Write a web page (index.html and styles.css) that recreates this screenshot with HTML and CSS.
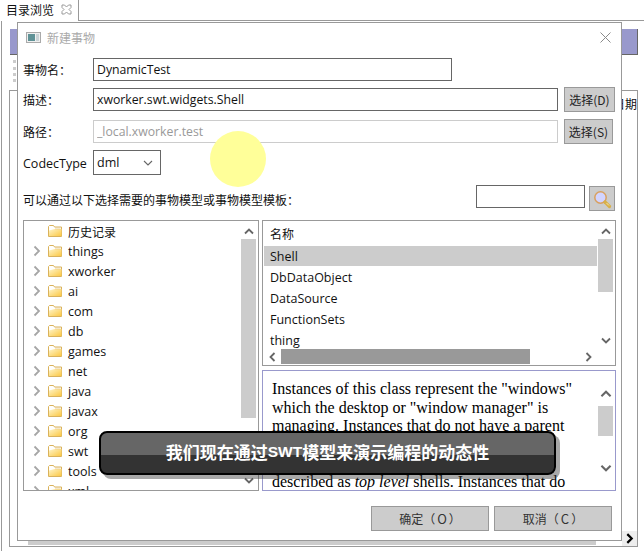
FILE: index.html
```html
<!DOCTYPE html>
<html lang="zh">
<head>
<meta charset="utf-8">
<title>目录浏览</title>
<link rel="stylesheet" href="styles.css">
</head>
<body>
<svg class="defs" width="0" height="0" aria-hidden="true">
  <defs>
    <linearGradient id="fold" x1="0" y1="0" x2="1" y2="1">
      <stop offset="0" stop-color="#fff4c8"/><stop offset="1" stop-color="#fbc845"/>
    </linearGradient>
    <symbol id="folder" viewBox="0 0 14 12">
      <path d="M.5 11.5V1.5L1.500.5h4l1 1.500h7v9.500z" fill="#fff" stroke="#d9b25c"/>
      <path d="M1 5.500 6.500 4h7v7H1z" fill="url(#fold)"/>
      <path d="M7 2.800h5.500M7 4h5.500" stroke="#e6c98a" stroke-width=".6"/>
    </symbol>
    <symbol id="chev-r" viewBox="0 0 8 12"><path d="M1.500 1.500 6 6l-4.500 4.500" fill="none" stroke="#a6a6a6" stroke-width="1.800"/></symbol>
    <symbol id="arr-u" viewBox="0 0 10 7"><path d="M1 5.500 5 1.500l4 4" fill="none" stroke="#666" stroke-width="1.800"/></symbol>
    <symbol id="arr-d" viewBox="0 0 10 7"><path d="M1 1.500 5 5.500l4-4" fill="none" stroke="#666" stroke-width="1.800"/></symbol>
    <symbol id="arr-l" viewBox="0 0 7 10"><path d="M5.500 1 1.500 5l4 4" fill="none" stroke="#666" stroke-width="1.800"/></symbol>
    <symbol id="arr-r" viewBox="0 0 7 10"><path d="M1.500 1l4 4-4 4" fill="none" stroke="#666" stroke-width="1.800"/></symbol>
  </defs>
</svg>

<div class="screen">
  <div class="tabbar">
    <div class="tab">
      <span class="tab-title">目录浏览</span>
      <svg class="tab-close" width="11" height="11" viewBox="0 0 11 11"><path d="M1 1h2.500L5.500 3l2-2H10v2.500L8 5.500l2 2V10H7.500l-2-2-2 2H1V7.500l2-2-2-2z" fill="#fff" stroke="#999"/></svg>
    </div>
    <div class="tabrest"></div>
  </div>

  <div class="view">
    <div class="banner"></div>
    <div class="grip"></div>
    <div class="panel">
      <div class="panel-head">日期</div>
      <div class="panel-body"></div>
      <div class="panel-scroll">
        <div class="panel-thumb"></div>
        <div class="panel-arrow"><svg width="9" height="11" viewBox="0 0 7 10"><path d="M1.500 1l4 4-4 4" fill="none" stroke="#000" stroke-width="2"/></svg></div>
      </div>
    </div>
  </div>

  <div class="dialog">
    <div class="dlg-title">
      <svg class="dlg-icon" width="15" height="11" viewBox="0 0 15 11">
        <rect x=".5" y=".5" width="14" height="10" fill="#f0f0f0" stroke="#aaa"/>
        <rect x="2" y="2" width="7" height="7" fill="#5f9296"/>
        <rect x="10" y="2" width="3" height="7" fill="#c9d3d6"/>
      </svg>
      <span class="dlg-name">新建事物</span>
      <svg class="dlg-close" width="11" height="11" viewBox="0 0 11 11"><path d="M.5.500l10 10M10.500.500l-10 10" stroke="#8a8a8a" fill="none"/></svg>
    </div>

    <div class="row row-1">
      <label class="label">事物名<span class="punct">：</span></label>
      <input class="field field-short" value="DynamicTest">
    </div>
    <div class="row row-2">
      <label class="label">描述<span class="punct">：</span></label>
      <input class="field field-long" value="xworker.swt.widgets.Shell">
      <button class="btn btn-d">选择(D)</button>
    </div>
    <div class="row row-3">
      <label class="label">路径<span class="punct">：</span></label>
      <input class="field field-long field-off" value="_local.xworker.test" disabled>
      <button class="btn btn-s">选择(S)</button>
    </div>
    <div class="row row-4">
      <label class="label label-latin">CodecType</label>
      <div class="select"><span>dml</span>
        <svg width="10" height="6" viewBox="0 0 10 6"><path d="M1 1l4 4 4-4" fill="none" stroke="#666" stroke-width="1.100"/></svg>
      </div>
    </div>
    <div class="row row-5">
      <div class="hint">可以通过以下选择需要的事物模型或事物模型模板<span class="punct">：</span></div>
      <input class="field field-search">
      <button class="btn btn-search">
        <svg width="22" height="22" viewBox="0 0 22 22">
          <circle cx="9.500" cy="9.500" r="5.700" fill="#d2d4ff" stroke="#d9a05e" stroke-width="1.500"/>
          <path d="M14 14l4.500 4.500" stroke="#d8b04a" stroke-width="3.200" stroke-linecap="round"/>
          <path d="M15.500 15l2.500 2.500" stroke="#f5e6a5" stroke-width="1"/>
        </svg>
      </button>
    </div>

    <div class="panes">
      <div class="tree">
        <ul class="tree-list">
          <li class="node"><span class="twist"></span><svg class="folder" width="14" height="12"><use href="#folder"/></svg><span class="cjk">历史记录</span></li>
          <li class="node"><svg class="twist" width="8" height="12"><use href="#chev-r"/></svg><svg class="folder" width="14" height="12"><use href="#folder"/></svg>things</li>
          <li class="node"><svg class="twist" width="8" height="12"><use href="#chev-r"/></svg><svg class="folder" width="14" height="12"><use href="#folder"/></svg>xworker</li>
          <li class="node"><svg class="twist" width="8" height="12"><use href="#chev-r"/></svg><svg class="folder" width="14" height="12"><use href="#folder"/></svg>ai</li>
          <li class="node"><svg class="twist" width="8" height="12"><use href="#chev-r"/></svg><svg class="folder" width="14" height="12"><use href="#folder"/></svg>com</li>
          <li class="node"><svg class="twist" width="8" height="12"><use href="#chev-r"/></svg><svg class="folder" width="14" height="12"><use href="#folder"/></svg>db</li>
          <li class="node"><svg class="twist" width="8" height="12"><use href="#chev-r"/></svg><svg class="folder" width="14" height="12"><use href="#folder"/></svg>games</li>
          <li class="node"><svg class="twist" width="8" height="12"><use href="#chev-r"/></svg><svg class="folder" width="14" height="12"><use href="#folder"/></svg>net</li>
          <li class="node"><svg class="twist" width="8" height="12"><use href="#chev-r"/></svg><svg class="folder" width="14" height="12"><use href="#folder"/></svg>java</li>
          <li class="node"><svg class="twist" width="8" height="12"><use href="#chev-r"/></svg><svg class="folder" width="14" height="12"><use href="#folder"/></svg>javax</li>
          <li class="node"><svg class="twist" width="8" height="12"><use href="#chev-r"/></svg><svg class="folder" width="14" height="12"><use href="#folder"/></svg>org</li>
          <li class="node"><svg class="twist" width="8" height="12"><use href="#chev-r"/></svg><svg class="folder" width="14" height="12"><use href="#folder"/></svg>swt</li>
          <li class="node"><svg class="twist" width="8" height="12"><use href="#chev-r"/></svg><svg class="folder" width="14" height="12"><use href="#folder"/></svg>tools</li>
          <li class="node"><svg class="twist" width="8" height="12"><use href="#chev-r"/></svg><svg class="folder" width="14" height="12"><use href="#folder"/></svg>xml</li>
        </ul>
        <div class="vbar vbar-tree">
          <svg class="up" width="10" height="7"><use href="#arr-u"/></svg>
          <div class="thumb thumb-tree"></div>
          <svg class="down" width="10" height="7"><use href="#arr-d"/></svg>
        </div>
      </div>

      <div class="side">
        <div class="list">
          <div class="list-main">
            <div class="list-rows">
              <div class="list-head">名称</div>
              <div class="item item-on">Shell</div>
              <div class="item">DbDataObject</div>
              <div class="item">DataSource</div>
              <div class="item">FunctionSets</div>
              <div class="item">thing</div>
            </div>
            <div class="vbar vbar-list">
              <svg class="up" width="10" height="7"><use href="#arr-u"/></svg>
              <div class="thumb thumb-list"></div>
              <svg class="down" width="10" height="7"><use href="#arr-d"/></svg>
            </div>
          </div>
          <div class="hbar">
            <svg class="hbar-l" width="7" height="10"><use href="#arr-l"/></svg>
            <div class="hbar-thumb"></div>
            <svg class="hbar-r" width="7" height="10"><use href="#arr-r"/></svg>
          </div>
        </div>
        <div class="doc">
          <div class="doc-text">Instances of this class represent the "windows" which the desktop or "window manager" is managing. Instances that do not have a parent (that is, they are built using the constructor which takes a Display as the argument) are described as <i>top level</i> shells. Instances that do have a parent are described as secondary or dialog shells.</div>
          <div class="vbar vbar-doc">
            <svg class="up" width="12" height="8"><use href="#arr-u"/></svg>
            <div class="thumb thumb-doc"></div>
            <svg class="down" width="12" height="8"><use href="#arr-d"/></svg>
          </div>
        </div>
      </div>
    </div>

    <div class="footer">
      <button class="btn btn-wide">确定<span class="punct">（</span><span class="key">O</span><span class="punct">）</span></button>
      <button class="btn btn-wide">取消<span class="punct">（</span><span class="key">C</span><span class="punct">）</span></button>
    </div>
  </div>

  <div class="spot"></div>
  <div class="toast">我们现在通过<span class="toast-latin">SWT</span>模型来演示编程的动态性</div>
</div>
</body>
</html>
```
FILE: styles.css
```css
* { box-sizing: border-box; }
html, body { margin: 0; padding: 0; background: #fff; }
body {
  font-family: "Open Sans", "Noto Sans CJK SC", sans-serif;
  font-size: 12.500px;
  color: #111;
}
.defs { position: absolute; }
.punct { font-family: "Noto Sans CJK TC", sans-serif; }
.key { margin: 0 2px; font-size: 13px; }
.screen { position: relative; width: 644px; height: 551px; overflow: hidden; background: #fff; }

.tabbar { display: flex; height: 21px; }
.tab {
  width: 79px; display: flex; align-items: center; padding: 0 0 2px 6px;
  border-right: 1px solid #999;
  font: 12px "Noto Sans CJK SC", sans-serif;
}
.tab-title { width: 55px; font-size: 12px; }
.tab-close { flex: none; }
.tabrest { flex: 1; border-bottom: 1px solid #999; }

.view {
  height: 530px; margin-left: 1px; padding: 8px 0 0 8px;
  border-left: 1px solid #999;
  display: flex; flex-direction: column;
}
.banner {
  width: 628px; height: 26px;
  background: #9999cc;
  border-bottom: 1px solid #666; border-right: 1px solid #666;
}
.grip { width: 3px; height: 22px; margin: 5px 0 0 3px; border-left: 3px dotted #ccc; }
.panel {
  width: 629px; height: 457px; margin: 8px 0 0 -1px;
  border: 1px solid #999;
  display: flex; flex-direction: column;
}
.panel-head { height: 26px; text-align: right; font: 12px/26px "Noto Sans CJK SC", sans-serif; }
.panel-body { flex: 1; }
.panel-scroll { display: flex; height: 15px; padding-left: 18px; justify-content: space-between; }
.panel-thumb { width: 568px; height: 14px; background: #ccc; }
.panel-arrow { width: 15px; background: #eee; display: flex; align-items: center; justify-content: center; }

.dialog {
  position: absolute; left: 17px; top: 22px;
  width: 605px; height: 519px;
  background: #fff; border: 1px solid #999;
  padding-left: 5px;
}
.dlg-title { height: 35px; display: flex; align-items: center; margin-left: -4px; padding: 0 10px 7px 7px; }
.dlg-icon { flex: none; }
.dlg-name { margin-left: 6px; flex: 1; color: #aaa; font: 12px "Noto Sans CJK SC", sans-serif; }
.row { display: flex; align-items: center; }
.row-1 { height: 23px; }
.row-2 { height: 25px; margin-top: 6px; }
.row-3 { height: 25px; margin-top: 7px; }
.row-4 { height: 25px; margin-top: 6px; }
.row-5 { height: 26px; margin-top: 10px; }
.label { width: 70px; flex: none; font: 12px "Noto Sans CJK SC", sans-serif; }
.label-latin { padding-top: 1px; font: 12.500px "Open Sans", sans-serif; }
.field {
  height: 23px; padding: 0 3px; border: 1px solid #666; border-radius: 0; outline: 0;
  font: 12.250px "Open Sans", sans-serif; color: #111; background: #fff;
}
.field-short { width: 359px; }
.field-long { width: 465px; }
.field-off { border-color: #ccc; color: #999; }
.field-search { width: 109px; margin-bottom: 3px; }
.select {
  width: 68px; height: 25px; border: 1px solid #666; padding: 0 4px 1px 3px;
  display: flex; align-items: center; justify-content: space-between;
}
.select svg { margin: 2px 3px 0 0; }
.hint { width: 453px; padding-top: 2px; font: 12px "Noto Sans CJK SC", sans-serif; }
.btn {
  background: #ccc; border: 1px solid #999; border-radius: 0; padding: 0; color: #222;
  font: 12px "Noto Sans CJK SC", sans-serif;
}
.btn-d { width: 51px; height: 25px; margin-left: 6px; }
.btn-s { width: 49px; height: 25px; margin-left: 6px; }
.btn-search { width: 26px; height: 25px; margin: 1px 0 0 4px; display: flex; align-items: center; justify-content: center; }
.btn-wide { width: 118px; height: 25px; color: #333; }

.panes { display: flex; gap: 3px; height: 271px; margin-top: 9px; }
.tree { width: 236px; border: 1px solid #999; display: flex; overflow: hidden; }
.tree-list { list-style: none; margin: 0; padding: 0; flex: 1; min-width: 0; overflow: hidden; }
.node { height: 20px; display: flex; align-items: center; padding-left: 9px; white-space: nowrap; }
.twist { width: 8px; height: 12px; flex: none; }
.folder { margin-left: 7px; margin-right: 6px; flex: none; }
.cjk { font: 12px "Noto Sans CJK SC", sans-serif; }

.vbar { width: 15px; flex: none; display: flex; flex-direction: column; align-items: center; }
.vbar .up { flex: none; margin-top: 7px; }
.vbar .thumb { width: 15px; flex: none; background: #ccc; }
.vbar .down { flex: none; margin-top: auto; }
.vbar-tree { margin-right: 2px; }
.thumb-tree { height: 179px; margin-top: 4px; }
.vbar-tree .down { margin-bottom: 6px; }

.side { width: 354px; display: flex; flex-direction: column; gap: 4px; }
.list { height: 146px; border: 1px solid #999; display: flex; flex-direction: column; }
.list-main { display: flex; height: 128px; }
.list-rows { flex: 1; min-width: 0; padding-left: 1px; overflow: hidden; }
.list-head { height: 25px; padding-left: 6px; font: 12px/26px "Noto Sans CJK SC", sans-serif; }
.item { height: 21px; line-height: 22px; padding-left: 6px; }
.item-on { height: 20px; margin: 0 1px 1px 0; background: #ccc; }
.vbar-list { margin-right: 2px; }
.thumb-list { height: 53px; margin-top: 4px; }
.vbar-list .down { margin-bottom: 5px; }
.hbar { height: 15px; display: flex; align-items: center; padding-left: 6px; }
.hbar-l { flex: none; }
.hbar-thumb { width: 249px; height: 15px; margin-left: 5px; background: #999; }
.hbar-r { flex: none; margin-left: 55px; }
.doc { flex: 1; min-height: 0; border: 1px solid #9999cc; display: flex; overflow: hidden; }
.doc-text {
  flex: 1; min-width: 0; padding: 9px 25px 0 9px; overflow: hidden;
  font: 16px/18.500px "Liberation Serif", serif; color: #000;
}
.vbar-doc { margin-right: 2px; }
.vbar-doc .up { margin-top: 19px; }
.thumb-doc { height: 30px; margin-top: 8px; }
.vbar-doc .down { margin-bottom: 18px; }

.footer { display: flex; justify-content: flex-end; gap: 5px; margin-top: 15px; padding-right: 9px; }

.spot {
  position: absolute; left: 210px; top: 131px; width: 56px; height: 56px;
  border-radius: 50%; background: #ffff99;
}
.toast {
  position: absolute; left: 99px; top: 431px; width: 457px; height: 44px;
  display: flex; align-items: center; justify-content: center; padding-bottom: 3px;
  border: 2px solid #000; border-radius: 8px;
  background: linear-gradient(#666 0, #666 54%, #333 54%, #333 100%);
  box-shadow: 4px 4px 0 rgba(60, 60, 60, .45);
  color: #fff;
  font: bold 17px "Noto Sans CJK SC", sans-serif;
}
.toast-latin { font: bold 15.500px "Liberation Sans", sans-serif; }
```
